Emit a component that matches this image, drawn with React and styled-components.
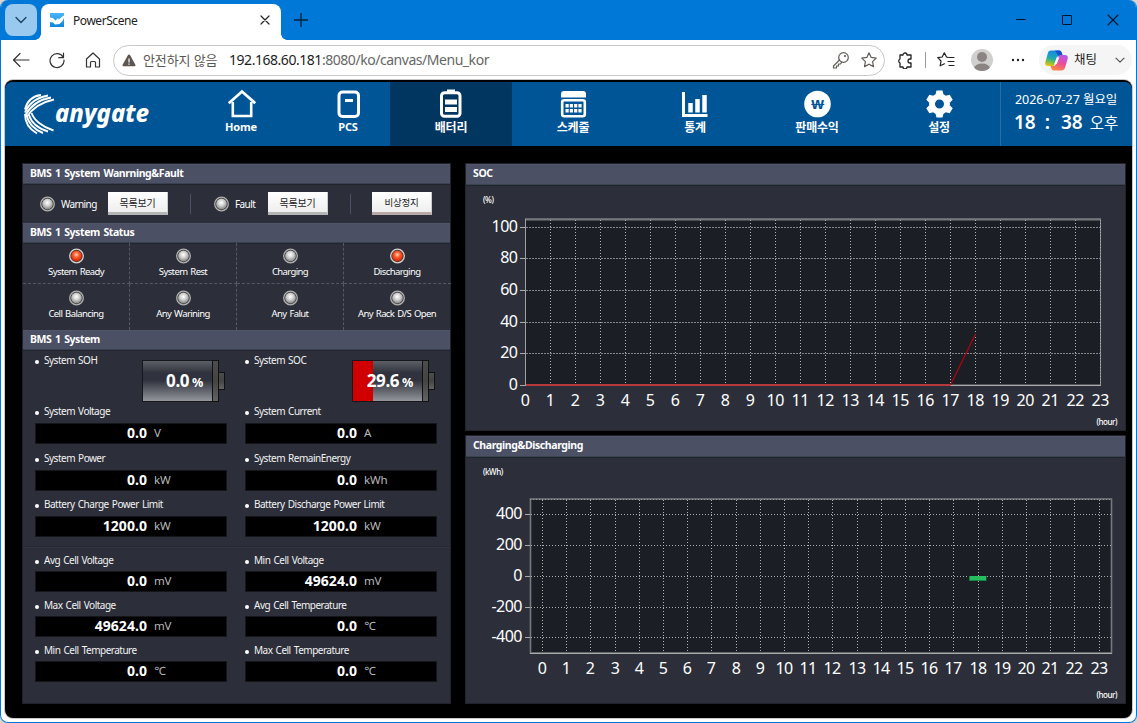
import React from "react";
import styled, { createGlobalStyle, css } from "styled-components";

const GlobalStyle = createGlobalStyle`
  * { box-sizing: border-box; }
  body { margin: 0; background: #d9d4cf; overflow: hidden; }
  body, text { font-family: "Noto Sans", "Noto Sans CJK KR", sans-serif; }
`;

/* ---------- browser window ---------- */
const Window = styled.div`
  width: 1137px;
  height: 723px;
  display: flex;
  flex-direction: column;
  background: #fff;
  border: 1px solid #0078d7;
  border-top: 0;
  border-radius: 8px;
  overflow: hidden;
`;
const TitleBar = styled.header`
  height: 40px;
  flex: none;
  display: flex;
  align-items: flex-start;
  background: #0078d7;
`;
const TabMenu = styled.button`
  width: 32px;
  height: 32px;
  margin: 4px 4px 0;
  padding: 0;
  border: 0;
  border-radius: 8px;
  background: #99c9ef;
  display: grid;
  place-items: center;
`;
const Tab = styled.div`
  position: relative;
  width: 240px;
  height: 36px;
  margin-top: 4px;
  padding: 0 11px 4px 9px;
  display: flex;
  align-items: center;
  gap: 8px;
  background: #fff;
  border-radius: 8px 8px 0 0;
  &::before, &::after {
    content: "";
    position: absolute;
    bottom: 0;
    width: 6px;
    height: 6px;
  }
  &::before { left: -6px; background: radial-gradient(circle at 0 0, transparent 5.5px, #fff 6px); }
  &::after { right: -6px; background: radial-gradient(circle at 100% 0, transparent 5.5px, #fff 6px); }
`;
const TabTitle = styled.span`
  flex: 1;
  padding-top: 1px;
  font-size: 12px;
  letter-spacing: -0.45px;
  line-height: 16px;
  color: #222;
`;
const NewTab = styled.div`
  margin: 13px 0 0 13px;
  height: 14px;
  svg { display: block; }
`;
const WindowButtons = styled.div`
  margin-left: auto;
  padding: 14px 17px 0 0;
  display: flex;
  gap: 34px;
  height: 26px;
`;
const Toolbar = styled.div`
  height: 40px;
  flex: none;
  display: flex;
  align-items: center;
  padding-left: 11px;
`;
const NavIcons = styled.div`
  display: flex;
  gap: 18px;
  width: 101px;
`;
const Address = styled.div`
  width: 772px;
  height: 31px;
  display: flex;
  align-items: center;
  padding: 0 6px 0 8px;
  border: 1px solid #c8c8c8;
  border-radius: 16px;
  font-size: 14px;
  white-space: nowrap;
`;
const Insecure = styled.span`
  margin: 0 11px 0 7px;
  width: 75px;
  font-size: 13px;
  line-height: 18px;
  padding-bottom: 1px;
  letter-spacing: -0.1px;
  color: #5c5652;
`;
const Url = styled.span`
  flex: 1;
  line-height: 20px;
  letter-spacing: -0.46px;
  color: #666;
  b { font-weight: 400; color: #1d1d1d; }
`;
const AddressIcons = styled.div`
  display: flex;
  gap: 10px;
`;
const ToolIcons = styled.div`
  display: flex;
  align-items: center;
  padding-left: 11px;
`;
const Separator = styled.i`
  width: 1px;
  height: 16px;
  margin: 0 11px 0 11px;
  background: #999;
`;
const Avatar = styled.svg`
  margin: 0 18px 0 16px;
`;
const CopilotChip = styled.div`
  width: 93px;
  height: 30px;
  margin-left: 14px;
  padding: 0 7px 0 6px;
  border-radius: 15px;
  background: #f5f5f5;
  display: flex;
  align-items: center;
  font-size: 12.5px;
  color: #222;
  span { margin-left: 6px; flex: 1; line-height: 18px; }
`;

/* ---------- page ---------- */
const Page = styled.main`
  flex: 1;
  margin: 0 4px 4px;
  padding-top: 2px;
  background: #000;
  border-radius: 8px;
  overflow: hidden;
  box-shadow: 0 0 0 1px #c9c9c9;
`;
const MainNav = styled.nav`
  height: 64px;
  display: flex;
  background: #005596;
  border-radius: 7px 7px 0 0;
`;
const LogoBox = styled.div`
  width: 171px;
  padding: 6px 0 0 18px;
`;
const NavItem = styled.a`
  width: ${(p) => p.$width || 122}px;
  padding-top: 7px;
  display: flex;
  flex-direction: column;
  align-items: center;
  color: #fff;
  font-weight: 700;
  font-size: ${(p) => (p.$width ? 11 : 12)}px;
  line-height: ${(p) => (p.$width ? 14 : 16)}px;
  letter-spacing: -0.2px;
  svg { display: block; margin: 0 0 1px 1px; }
  ${(p) => p.$active && css`background: #00365f; svg { margin-left: 0; }`}
`;
const Clock = styled.div`
  flex: 1;
  border-left: 1px solid #2a6ca3;
  padding: 9px 0 0 14px;
  color: #fff;
  white-space: nowrap;
`;
const DateLine = styled.div`
  font-size: 12.5px;
  line-height: 18px;
  letter-spacing: -0.05px;
`;
const TimeLine = styled.div`
  display: flex;
  align-items: baseline;
  margin-left: -1px;
  font-size: 19px;
  line-height: 27px;
  b { font-weight: 600; }
  b:nth-child(2) { margin: 0 11px 0 9px; }
  span { font-size: 15.5px; margin-left: 7px; }
`;
const Columns = styled.div`
  display: flex;
  gap: 14px;
  padding: 17px 6px 0 17px;
`;
const LeftPanel = styled.section`
  width: 429px;
  height: 541px;
  background: #2c2f3a;
  border: 1px solid #20232c;
`;
const RightColumn = styled.div`
  display: flex;
  flex-direction: column;
  gap: 4px;
  width: 661px;
`;
const ChartPanel = styled.section`
  height: ${(p) => p.$height}px;
  background: #2c2f3a;
  border: 1px solid #20232c;
  svg { display: block; }
`;
const PanelTitle = styled.h2`
  margin: 0;
  height: ${(p) => p.$height || 20}px;
  padding-left: 7px;
  background: #4b5064;
  border-bottom: 1px solid #3a4150;
  box-shadow: 0 1px 0 #20242b, inset 0 1px 0 #505569;
  color: #fff;
  font-size: 10.5px;
  line-height: 19px;
  font-weight: 700;
  letter-spacing: -0.4px;
  word-spacing: 1.2px;
`;
const AlarmRow = styled.div`
  height: 38px;
  display: flex;
  align-items: center;
  padding: 0 0 1px 16px;
  margin-top: 1px;
`;
const AlarmName = styled.span`
  width: ${(p) => p.$width}px;
  margin-left: 6px;
  font-size: 10px;
  letter-spacing: -0.6px;
  line-height: 14px;
  color: #fff;
`;
const ListButton = styled.button`
  width: 60px;
  height: 23px;
  padding: 1px 0 0;
  border: 0;
  border-bottom: 3px solid ${(p) => (p.$danger ? "#b9aaa8" : "#b4b4b4")};
  border-right: 1px solid #ccc;
  background: linear-gradient(#fff, #eee);
  color: #1c1c1c;
  font: 400 ${(p) => (p.$danger ? 9.5 : 10)}px/14px "Noto Sans", "Noto Sans CJK KR", sans-serif;
  letter-spacing: ${(p) => (p.$danger ? -0.3 : -0.2)}px;
`;
const Rule = styled.i`
  width: 1px;
  height: 20px;
  margin: 0 ${(p) => p.$right}px 0 22px;
  background: #4b5064;
`;
const StatusGrid = styled.div`
  display: grid;
  grid-template-columns: repeat(4, 107px);
  grid-template-rows: 41px 46px;
`;
const StatusCell = styled.div`
  padding: ${(p) => (p.$second ? 6 : 5)}px ${(p) => (p.$last ? 1 : 0)}px 0 0;
  display: flex;
  flex-direction: column;
  align-items: center;
  gap: 1px;
  color: #fff;
  font-size: 9.5px;
  line-height: 14px;
  letter-spacing: -0.6px;
  word-spacing: 1px;
  white-space: nowrap;
  border-right: ${(p) => (p.$last ? "0" : "1px dashed #555964")};
  border-bottom: ${(p) => (p.$second ? "0" : "1px dashed #555964")};
`;
const FieldRow = styled.div`
  height: ${(p) => p.$height}px;
  display: grid;
  grid-template-columns: 192px 192px;
  column-gap: 18px;
  padding-left: 12px;
`;
const Field = styled.div`
  display: flex;
  flex-direction: column;
  gap: ${(p) => p.$gap}px;
`;
const FieldLabel = styled.div`
  display: flex;
  align-items: center;
  gap: 5px;
  height: 18px;
  font-size: 10px;
  line-height: 14px;
  padding-bottom: 1px;
  letter-spacing: -0.5px;
  word-spacing: 1px;
  color: #f2f2f2;
  white-space: nowrap;
  &::before {
    content: "";
    width: 4px;
    height: 4px;
    margin-top: 5px;
    border-radius: 50%;
    background: #fff;
  }
`;
const FieldBox = styled.div`
  height: 21px;
  display: flex;
  align-items: center;
  background: #000;
  border: 1px solid #14161b;
  padding-bottom: 1px;
  color: #fff;
  b {
    width: 111px;
    text-align: right;
    font-size: 14px;
    line-height: 18px;
    letter-spacing: 0.05px;
  }
  span { margin-left: 7px; font-size: 11.5px; line-height: 18px; letter-spacing: -0.2px; color: #b8b8b8; }
`;
const GaugeRow = styled(FieldRow)`
  padding-top: 1px;
`;
const GaugeField = styled.div`
  display: flex;
  justify-content: space-between;
`;
const Gauge = styled.div`
  display: flex;
  align-items: center;
  height: 42px;
  margin: 9px 2px 0 0;
`;
const GaugeBody = styled.div`
  width: 71px;
  height: 42px;
  border: 1px solid #15171c;
  background:
    linear-gradient(90deg, #d00000 ${(p) => p.$level}%, transparent ${(p) => p.$level}%),
    linear-gradient(#5c5f66 0, #30333d 30%, #30333d 48%, #62656c 75%, #94969c 100%);
  display: flex;
  justify-content: flex-end;
  align-items: baseline;
  padding-right: 9px;
  color: #fff;
  font-weight: 700;
  font-size: 17px;
  line-height: 40px;
  letter-spacing: -0.4px;
  white-space: nowrap;
  small { font-size: 12.5px; margin-left: 3px; }
`;
const GaugeCap = styled.i`
  width: ${(p) => p.$width}px;
  height: ${(p) => p.$height}px;
  margin-left: -1px;
  border: 1px solid #111;
  background: linear-gradient(#4c4c4c, #444 50%, #636363);
`;
const Divider = styled.div`
  height: 2px;
  margin-bottom: 3px;
  background: #252831;
  border-bottom: 1px solid #31343f;
`;

/* ---------- drawings ---------- */
const Lamp = ({ on, id }) => (
  <svg width="16" height="16" viewBox="0 0 16 16">
    <defs>
      <radialGradient id={id} cx="0.48" cy="0.38" r="0.6">
        <stop offset="0" stopColor={on ? "#ffd5b8" : "#fff"} />
        <stop offset="0.45" stopColor={on ? "#ff5a2c" : "#d4d4d4"} />
        <stop offset="1" stopColor={on ? "#d02400" : "#888"} />
      </radialGradient>
    </defs>
    <circle cx="8.500" cy="8" r="6.800" fill="#3a3838" stroke={on ? "#d9d0cd" : "#b0b0b0"} strokeWidth="1.300" />
    <circle cx="8.500" cy="8" r="5.400" fill={`url(#${id})`} />
  </svg>
);

const Stroke = ({ w = 18, h = w, sw = 1.2, color = "#333", children, vb }) => (
  <svg width={w} height={h} viewBox={vb || `0 0 ${w} ${h}`} fill="none" stroke={color} strokeWidth={sw} strokeLinecap="round" strokeLinejoin="round">
    {children}
  </svg>
);
const STAR = "M9 1.8l2.2 4.6 5 .7-3.6 3.5.9 5L9 13.2l-4.500 2.400.9-5L1.800 7.100l5-.7z";

const Favicon = () => (
  <svg width="15" height="14" viewBox="0 0 15 14">
    <defs><linearGradient id="fav" x2="0" y2="1"><stop stopColor="#48b6fc" /><stop offset="1" stopColor="#0b86dd" /></linearGradient></defs>
    <rect width="14" height="14" fill="url(#fav)" />
    <path d="M0 4.500l3 .5 2.500 2.500L8 5l.8 1.500L11.500 4 14 2.500v2.300l-1.500 3.200L9.500 11 5 11.500 3 9.500 0 9z" fill="#fff" />
  </svg>
);

const Copilot = () => (
  <svg width="23" height="21" viewBox="0 0 23 21">
    <defs>
      <linearGradient id="cpA" x1="0.5" y1="0" x2="0.2" y2="1">
        <stop stopColor="#1687e8" /><stop offset=".5" stopColor="#20a8b0" /><stop offset=".75" stopColor="#7bc043" /><stop offset="1" stopColor="#f5c400" />
      </linearGradient>
      <linearGradient id="cpB" x1="0.7" y1="0" x2="0.3" y2="1">
        <stop stopColor="#b35be8" /><stop offset=".5" stopColor="#ec4c9a" /><stop offset="1" stopColor="#ff8a3c" />
      </linearGradient>
    </defs>
    <path d="M6 .5h8c2 0 2.500 1.500 3 3l.7 2.500h-3C12 6 11.500 8 10.800 10l-1.500 4.500C9 15.500 8 16 7 16H3c-2.500 0-3.300-1.600-2.600-4l2.500-9C3.500 1.200 4.500.5 6 .5z" fill="url(#cpA)" />
    <path d="M10 .5h4c2 0 2.500 1.500 3 3l.7 2.500h-4z" fill="#1b4fc4" />
    <path d="M16.500 5H20c2.400 0 3.300 1.600 2.600 4l-2.500 8.500c-.6 2-1.600 3-3.600 3H9c-2 0-2.600-1.500-3-3L5.500 16h2.800c2 0 2.700-1.500 3.300-3.500L13.300 7c.5-1.400 1.500-2 3.200-2z" fill="url(#cpB)" />
    <path d="M12 7.500h2.300L11.800 14H9.300z" fill="#fff" opacity=".9" />
  </svg>
);

const Logo = () => (
  <svg width="140" height="54" viewBox="23 88 140 54">
    <g fill="none" stroke="#fff" strokeWidth="1.900">
      <path d="M25 109.500C27 101 33 96 41 95" />
      <path d="M25 112.500C29 103 37 97.500 48 95.500" />
      <path d="M25.500 115C31 105 40 99.500 51 97.500" />
      <path d="M26.500 117C33 107.500 42 102 54 99.500" />
      <path d="M25 114C25 122 29 129 37 133.500" />
      <path d="M26.500 115C28 122 33 129 43 133" />
      <path d="M29 115C31 122 37 128 48 131.500" />
      <path d="M31.500 113C34 120 42 127 53.500 130.500" />
    </g>
    <text x="55" y="121.500" fill="#fff" fontFamily="Open Sans" fontSize="25.500" fontWeight="800" fontStyle="italic" textLength="94" lengthAdjust="spacingAndGlyphs">anygate</text>
  </svg>
);

const NavGlyph = ({ children }) => <svg width="30" height="30" viewBox="0 0 30 30" fill="none" stroke="#fff">{children}</svg>;
const GEAR_TEETH = [0, 60, 120, 180, 240, 300];
const GLYPHS = {
  home: <NavGlyph><path d="M5.800 13v14h18.400V13" strokeWidth="2.600" /><path d="M1.800 14.200L15 2.500l13.200 11.700" strokeWidth="2.800" /></NavGlyph>,
  pcs: <NavGlyph><rect x="5" y="3" width="19.500" height="24.500" rx="3.500" strokeWidth="3" /><path d="M11 11.500h8" strokeWidth="3" /></NavGlyph>,
  battery: (
    <NavGlyph>
      <rect x="5.500" y="3.800" width="18.500" height="23.400" rx="3" strokeWidth="3" />
      <path d="M11 2h8" strokeWidth="3" /><path d="M9 13h12M9 20.500h12" strokeWidth="5.200" />
    </NavGlyph>
  ),
  calendar: (
    <NavGlyph>
      <path d="M2 8.500V5Q2 2 5 2h19Q27 2 27 5v3.500z" fill="#fff" stroke="none" />
      <rect x="3.200" y="11.300" width="22.600" height="16" rx="2" strokeWidth="2.600" />
      {[15, 20].map((y) => [6.500, 10.800, 15.100, 19.400].map((x) => <rect key={`${x}-${y}`} x={x} y={y} width="3.200" height="3.500" fill="#fff" stroke="none" />))}
    </NavGlyph>
  ),
  stats: <NavGlyph><path d="M2.500 3v23.500H26.500" strokeWidth="3" /><path d="M9.500 14v9.500M16.500 10v13.500M23.500 6v17.500" strokeWidth="4.500" /></NavGlyph>,
  won: <NavGlyph><circle cx="14.500" cy="15" r="13.300" fill="#fff" stroke="none" /><text x="14.500" y="19.500" fill="#005596" stroke="none" fontSize="13" fontWeight="700" textAnchor="middle" textLength="13" lengthAdjust="spacingAndGlyphs">₩</text></NavGlyph>,
  gear: (
    <NavGlyph>
      <circle cx="14.500" cy="15" r="7.500" strokeWidth="6" />
      {GEAR_TEETH.map((a) => <path key={a} d="M10.500 5.500L11.500 1.500h6L18.500 5.500z" fill="#fff" stroke="none" transform={`rotate(${a} 14.5 15)`} />)}
    </NavGlyph>
  ),
};

/* ---------- charts ---------- */
const HOURS = Array.from({ length: 24 }, (_, i) => i);
const AxisText = styled.text`
  font-size: 16px;
  letter-spacing: -0.5px;
  fill: #fff;
`;
const UnitText = styled.text`
  font-size: 8px;
  letter-spacing: -0.45px;
  font-weight: 500;
  fill: #fff;
`;

const SocChart = () => {
  const x = (h) => 525.5 + h * 25;
  const rows = [[100, 227.5], [80, 258.5], [60, 290.5], [40, 322.5], [20, 353.5], [0, 385.5]];
  return (
    <svg width="659" height="245" viewBox="466 185 659 245">
      <UnitText x="483" y="203">(%)</UnitText>
      <rect x="525.5" y="219" width="575" height="166" fill="#1c1e26" stroke="#8b8b8f" strokeWidth="1" />
      <path d="M525 219.500H1101" stroke="#77787d" strokeWidth="2" />
      <path d="M525 385.500H1101" stroke="#aaa" strokeWidth="1" />
      {rows.map(([v, y]) => (
        <g key={v}>
          {v > 0 && <path d={`M526 ${y}H1100`} stroke="#85868a" strokeDasharray="2 1" />}
          <path d={`M520 ${y}h5`} stroke="#aaa" />
          <AxisText x="517.5" y={y + 4.500} textAnchor="end">{v}</AxisText>
        </g>
      ))}
      {HOURS.map((h) => (
        <g key={h}>
          {h > 0 && <path d={`M${x(h)} 220V385`} stroke="#b0b0b0" strokeDasharray="1 2" />}
          <AxisText x={x(h) - 0.3} y="406" textAnchor="middle">{h}</AxisText>
        </g>
      ))}
      <path d="M525.5 219V386" stroke="#a0a0a0" />
      <path d="M526 385H950.500" stroke="#b7373b" strokeWidth="1.800" fill="none" />
      <path d="M950.500 385L975.500 334" stroke="#c00008" strokeWidth="1.100" fill="none" />
      <UnitText x="1117" y="424.500" textAnchor="end">(hour)</UnitText>
    </svg>
  );
};

const PowerChart = () => {
  const x = (h) => Math.round(542 + h * 24.2) + 0.5;
  const rows = [[400, 514.5], [200, 545.5], [0, 576.5], [-200, 607.5], [-400, 637.5]];
  return (
    <svg width="659" height="246" viewBox="466 457 659 246">
      <UnitText x="483" y="475">(kWh)</UnitText>
      <rect x="530.5" y="499" width="581" height="154" fill="#1c1e26" stroke="#77787d" strokeWidth="1.600" />
      {rows.map(([v, y]) => (
        <g key={v}>
          <path d={`M531 ${y}H1111`} stroke="#aaa" strokeDasharray="1 2" />
          <path d={`M525 ${y}h5`} stroke="#aaa" />
          <AxisText x="522" y={y + 4.500} textAnchor="end">{v}</AxisText>
        </g>
      ))}
      {HOURS.map((h) => (
        <g key={h}>
          <path d={`M${x(h)} 500V653`} stroke="#b0b0b0" strokeDasharray="1 2" />
          <AxisText x={x(h) - 0.4} y="674" textAnchor="middle">{h}</AxisText>
        </g>
      ))}
      <path d="M530 653.500H1112" stroke="#aaa" />
      <path d="M530 499.500H1111" stroke="#999" strokeDasharray="1 2" />
      <rect x="969" y="576" width="17.500" height="5" fill="#168244" />
      <rect x="970" y="576" width="16" height="4" fill="#25bd5e" />
      <UnitText x="1117" y="697.500" textAnchor="end">(hour)</UnitText>
    </svg>
  );
};

/* ---------- data ---------- */
const MENU = [
  ["Home", "home", 130], ["PCS", "pcs", 84], ["배터리", "battery"], ["스케줄", "calendar"],
  ["통계", "stats"], ["판매수익", "won"], ["설정", "gear"],
];
const STATUS = [
  ["System Ready", true], ["System Rest"], ["Charging"], ["Discharging", true],
  ["Cell Balancing"], ["Any Warining"], ["Any Falut"], ["Any Rack D/S Open"],
];
const POWER_ROWS = [
  { height: 47, gap: 3, cells: [["System Voltage", "0.0", "V"], ["System Current", "0.0", "A"]] },
  { height: 46, gap: 3, cells: [["System Power", "0.0", "kW"], ["System RemainEnergy", "0.0", "kWh"]] },
  { height: 51, gap: 3, cells: [["Battery Charge Power Limit", "1200.0", "kW"], ["Battery Discharge Power Limit", "1200.0", "kW"]] },
];
const CELL_ROWS = [
  { height: 45, gap: 2, cells: [["Avg Cell Voltage", "0.0", "mV"], ["Min Cell Voltage", "49624.0", "mV"]] },
  { height: 45, gap: 2, cells: [["Max Cell Voltage", "49624.0", "mV"], ["Avg Cell Temperature", "0.0", "℃"]] },
  { height: 45, gap: 2, cells: [["Min Cell Temperature", "0.0", "℃"], ["Max Cell Temperature", "0.0", "℃"]] },
];

const Fields = ({ rows }) =>
  rows.map((row) => (
    <FieldRow key={row.cells[0][0]} $height={row.height}>
      {row.cells.map(([label, value, unit]) => (
        <Field key={label} $gap={row.gap}>
          <FieldLabel>{label}</FieldLabel>
          <FieldBox><b>{value}</b><span>{unit}</span></FieldBox>
        </Field>
      ))}
    </FieldRow>
  ));

const BatteryGauge = ({ label, value, level }) => (
  <GaugeField>
    <FieldLabel>{label}</FieldLabel>
    <Gauge>
      <GaugeBody $level={level}>{value}<small>%</small></GaugeBody>
      <GaugeCap $width={7} $height={42} />
      <GaugeCap $width={7} $height={18} />
    </Gauge>
  </GaugeField>
);

export default function App() {
  return (
    <Window>
      <GlobalStyle />
      <TitleBar>
        <TabMenu><Stroke w={12} h={8} color="#173a58"><path d="M1 1.500l5 5 5-5" /></Stroke></TabMenu>
        <Tab>
          <Favicon />
          <TabTitle>PowerScene</TabTitle>
          <Stroke w={10} color="#222"><path d="M1 1l8 8M9 1l-8 8" /></Stroke>
        </Tab>
        <NewTab><Stroke w={14} color="#06213a" sw={1.3}><path d="M7 .5v13M.5 7h13" /></Stroke></NewTab>
        <WindowButtons>
          <Stroke w={12} color="#001222" sw={1}><path d="M1.500 5.500h9" /></Stroke>
          <Stroke w={12} color="#001222" sw={1}><rect x="1.500" y="1.500" width="9" height="9" rx=".5" /></Stroke>
          <Stroke w={12} color="#001222" sw={1.1}><path d="M1 1l10 10M11 1L1 11" /></Stroke>
        </WindowButtons>
      </TitleBar>
      <Toolbar>
        <NavIcons>
          <Stroke><path d="M17 9H1.500M8 2.500L1.500 9 8 15.500" /></Stroke>
          <Stroke><path d="M15.300 6.500A7 7 0 1 0 16 9M15.500 2v4.700h-4.700" /></Stroke>
          <Stroke><path d="M2.500 8L9 2l6.500 6v8h-4v-4.500a1 1 0 0 0-1-1h-3a1 1 0 0 0-1 1V16h-4z" /></Stroke>
        </NavIcons>
        <Address>
          <svg width="14" height="13" viewBox="0 0 14 13"><path d="M7 .5q.7 0 1 .6l5.500 10q.4 1-.8 1.200H1.300Q.1 12.100.5 11.100l5.500-10Q6.300.5 7 .5z" fill="#5c5652" /><path d="M7 4.500v4M7 9.500v1.300" stroke="#fff" strokeWidth="1.200" /></svg>
          <Insecure>안전하지 않음</Insecure>
          <Url><b>192.168.60.181</b>:8080/ko/canvas/Menu_kor</Url>
          <AddressIcons>
            <Stroke color="#605c58"><circle cx="11.500" cy="6.500" r="4.800" /><path d="M7.500 9L1.500 15v2h3v-2h2v-2h2l1.200-1.800" /><circle cx="13" cy="5" r=".5" /></Stroke>
            <Stroke color="#605c58"><path d={STAR} /></Stroke>
          </AddressIcons>
        </Address>
        <ToolIcons>
          <Stroke color="#222" sw={1.3}><path d="M4 4h3a2 2 0 0 1 4 0h4v4h-1a2 2 0 0 0 0 4h1v4h-4a2 2 0 0 1-4 0H4v-4a2.200 2.200 0 0 1 0-4z" /></Stroke>
          <Separator />
          <Stroke color="#222"><path d="M11 6.300L9.500 6 7.300 1.800 5.200 6l-4.400.7L4 10l-.8 4.800 4.300-2M12 6.500h5M11 10.500h6M12 14.500h5" /></Stroke>
          <Avatar width="22" height="22" viewBox="0 0 22 22">
            <defs><clipPath id="avatar"><circle cx="11" cy="11" r="11" /></clipPath></defs>
            <g clipPath="url(#avatar)"><rect width="22" height="22" fill="#d1cfcd" /><circle cx="11" cy="8" r="5" fill="#8a8583" /><ellipse cx="11" cy="19.500" rx="8" ry="5" fill="#8a8583" /></g>
          </Avatar>
          <svg width="14" height="4" viewBox="0 0 14 4" fill="#222"><circle cx="2" cy="2" r="1.200" /><circle cx="7" cy="2" r="1.200" /><circle cx="12" cy="2" r="1.200" /></svg>
          <CopilotChip>
            <Copilot />
            <span>채팅</span>
            <Stroke w={10} h={7} color="#555"><path d="M1 1.200l4 4 4-4" /></Stroke>
          </CopilotChip>
        </ToolIcons>
      </Toolbar>
      <Page>
        <MainNav>
          <LogoBox><Logo /></LogoBox>
          {MENU.map(([label, glyph, width]) => (
            <NavItem key={label} $width={width} $active={glyph === "battery"}>{GLYPHS[glyph]}{label}</NavItem>
          ))}
          <Clock>
            <DateLine>2026-07-27 월요일</DateLine>
            <TimeLine><b>18</b><b>:</b><b>38</b><span>오후</span></TimeLine>
          </Clock>
        </MainNav>
        <Columns>
          <LeftPanel>
            <PanelTitle>BMS 1 System Wanrning&amp;Fault</PanelTitle>
            <AlarmRow>
              <Lamp id="lampWarning" /><AlarmName $width={47}>Warning</AlarmName>
              <ListButton>목록보기</ListButton>
              <Rule $right={22} />
              <Lamp id="lampFault" /><AlarmName $width={33}>Fault</AlarmName>
              <ListButton>목록보기</ListButton>
              <Rule $right={21} />
              <ListButton $danger>비상정지</ListButton>
            </AlarmRow>
            <PanelTitle>BMS 1 System Status</PanelTitle>
            <StatusGrid>
              {STATUS.map(([name, on], i) => (
                <StatusCell key={name} $second={i > 3} $last={i % 4 === 3}><Lamp id={`lamp${i}`} on={on} />{name}</StatusCell>
              ))}
            </StatusGrid>
            <PanelTitle>BMS 1 System</PanelTitle>
            <GaugeRow $height={52}>
              <BatteryGauge label="System SOH" value="0.0" level={0} />
              <BatteryGauge label="System SOC" value="29.6" level={29.6} />
            </GaugeRow>
            <Fields rows={POWER_ROWS} />
            <Divider />
            <Fields rows={CELL_ROWS} />
          </LeftPanel>
          <RightColumn>
            <ChartPanel $height={268}><PanelTitle $height={21}>SOC</PanelTitle><SocChart /></ChartPanel>
            <ChartPanel $height={269}><PanelTitle $height={21}>Charging&amp;Discharging</PanelTitle><PowerChart /></ChartPanel>
          </RightColumn>
        </Columns>
      </Page>
    </Window>
  );
}
